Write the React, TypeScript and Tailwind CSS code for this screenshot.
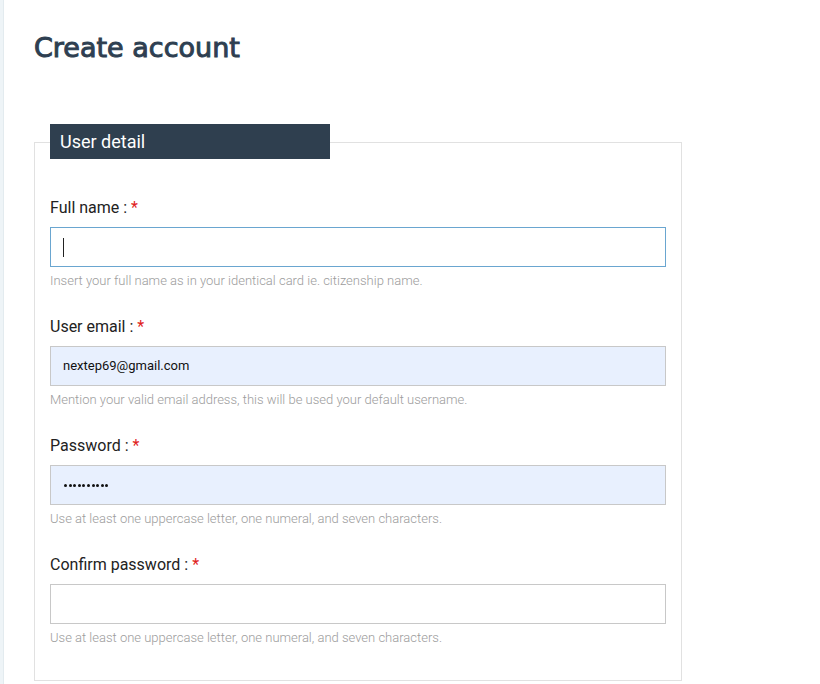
import React from "react";

const Field = ({
  label,
  help,
  children,
}: {
  label: string;
  help: string;
  children: React.ReactNode;
}) => (
  <div className="mt-6 first:mt-0">
    <div className="pt-px text-[16px] leading-6 text-[#222]">
      {label} : <span className="text-[#e02020]">*</span>
    </div>
    <div className="mt-[7px]">{children}</div>
    <div className="mt-[5px] text-[13px] font-light leading-[18px] text-[#9c9c9c]">{help}</div>
  </div>
);

export default function App() {
  return (
    <div
      className="flex min-h-[684px] bg-white"
      style={{ fontFamily: "Roboto, 'Liberation Sans', sans-serif" }}
    >
      <div className="w-[4px] shrink-0 bg-[#eef4f7] border-r border-[#e3ebef]" />
      <div className="pl-[30px] pt-[30px]">
        <h1
          className="text-[27px] leading-[36px] font-normal text-[#2e3f51] [-webkit-text-stroke:1px_#2e3f51]"
          style={{ fontFamily: "'DejaVu Sans', sans-serif" }}
        >
          Create account
        </h1>
        <div className="mt-[76px] w-[648px] border border-[#e1e1e1] px-[15px] pb-[33px]">
          <div className="-mt-[19px] flex h-[35px] w-[280px] items-center bg-[#2f3f4f] pl-[10px] text-[18px] text-white">
            User detail
          </div>
          <div className="mt-[36px]">
            <Field
              label="Full name"
              help="Insert your full name as in your identical card ie. citizenship name."
            >
              <div className="flex h-[40px] items-center border border-[#6aa6d0] bg-white px-3">
                <span className="h-[19px] w-px bg-[#222]" />
              </div>
            </Field>
            <Field
              label="User email"
              help="Mention your valid email address, this will be used your default username."
            >
              <div className="flex h-[40px] items-center border border-[#c8c8c8] bg-[#e8f0fe] px-3 text-[13px] text-[#111]">
                nextep69@gmail.com
              </div>
            </Field>
            <Field
              label="Password"
              help="Use at least one uppercase letter, one numeral, and seven characters."
            >
              <div className="flex h-[40px] items-center gap-[1.6px] border border-[#c8c8c8] bg-[#e8f0fe] px-3 pl-[13px]">
                {Array.from({ length: 10 }).map((_, i) => (
                  <span key={i} className="h-[3px] w-[3px] rounded-full bg-[#111]" />
                ))}
              </div>
            </Field>
            <Field
              label="Confirm password"
              help="Use at least one uppercase letter, one numeral, and seven characters."
            >
              <div className="h-[40px] border border-[#c8c8c8] bg-white" />
            </Field>
          </div>
        </div>
      </div>
    </div>
  );
}
